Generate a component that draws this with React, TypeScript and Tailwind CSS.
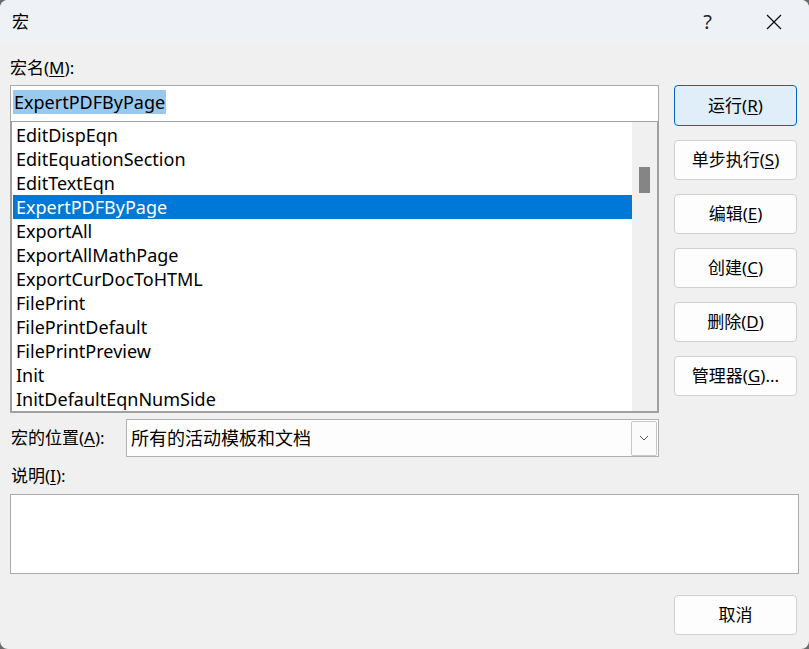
import { ReactNode } from "react";

const macros = [
  "EditDispEqn",
  "EditEquationSection",
  "EditTextEqn",
  "ExpertPDFByPage",
  "ExportAll",
  "ExportAllMathPage",
  "ExportCurDocToHTML",
  "FilePrint",
  "FilePrintDefault",
  "FilePrintPreview",
  "Init",
  "InitDefaultEqnNumSide",
];

const font = "font-['Segoe_UI','Noto_Sans','Noto_Sans_CJK_SC',sans-serif]";

function Key({ k }: { k: string }) {
  return <span className="underline underline-offset-2">{k}</span>;
}

function Btn({ children, primary }: { children: ReactNode; primary?: boolean }) {
  return (
    <div
      className={
        primary
          ? "h-[41px] flex items-center justify-center rounded-[4px] border border-[#0067c0] bg-[#e0eef9] text-[17px] text-black"
          : "h-[40px] flex items-center justify-center rounded-[4px] border border-[#d0d0d0] bg-[#fdfdfd] text-[17px] text-black"
      }
    >
      {children}
    </div>
  );
}

export default function App() {
  return (
    <div className={`w-[809px] h-[649px] bg-[#6b6b6b] ${font}`}>
      <div className="w-full h-full rounded-[8px] overflow-hidden bg-[#f0f0f0] flex flex-col">
        {/* title bar */}
        <div className="h-[43px] bg-[#eef2f7] flex items-center pl-[12px] shrink-0">
          <span className="text-[17px] text-black">宏</span>
          <span className="ml-auto mr-[54px] text-[20px] text-[#222]">?</span>
          <svg width="16" height="16" viewBox="0 0 16 16" className="mr-[27px]">
            <path d="M1 1 L15 15 M15 1 L1 15" stroke="#111" strokeWidth="1.3" />
          </svg>
        </div>

        <div className="flex px-[10px]">
          {/* left column */}
          <div className="w-[649px] flex flex-col">
            <div className="h-[42px] flex items-center text-[17px] pt-[7px]">
              宏名(<Key k="M" />):
            </div>
            <div className="h-[36px] border border-[#a9a9a9] border-b-0 bg-white flex items-center pl-[2px] pb-[4px]">
              <span className="bg-[#99c9ef] text-[18px] leading-[24px] px-[1px]">ExpertPDFByPage</span>
            </div>
            <div className="h-[292px] border-2 border-[#a0a0a0] border-t-[1px] bg-white flex">
              <div className="flex-1 pt-[1px]">
                {macros.map((m) => (
                  <div
                    key={m}
                    className={
                      m === "ExpertPDFByPage"
                        ? "h-[24px] flex items-center pl-[3px] ml-[1px] text-[18px] bg-[#0078d7] text-white"
                        : "h-[24px] flex items-center pl-[3px] ml-[1px] text-[18px] text-black"
                    }
                  >
                    {m}
                  </div>
                ))}
              </div>
              <div className="w-[25px] bg-[#f0f0f0] relative">
                <div className="absolute left-[7px] top-[45px] w-[11px] h-[26px] bg-[#858585]" />
              </div>
            </div>
            <div className="mt-[6px] h-[38px] flex items-center">
              <div className="w-[116px] pl-[1px] text-[17px]">
                宏的位置(<Key k="A" />):
              </div>
              <div className="flex-1 h-[38px] border border-[#b0b0b0] bg-[#fdfdfd] flex items-center pl-[4px] pr-[1px]">
                <span className="text-[18px]">所有的活动模板和文档</span>
                <div className="ml-auto w-[26px] h-[35px] border border-[#c8c8c8] rounded-[2px] bg-[#fbfbfb] flex items-center justify-center">
                  <svg width="10" height="6" viewBox="0 0 10 6">
                    <path d="M1 1 L5 5 L9 1" stroke="#555" strokeWidth="1" fill="none" />
                  </svg>
                </div>
              </div>
            </div>
          </div>

          {/* right column */}
          <div className="ml-[15px] w-[123px] pt-[42px] flex flex-col gap-[14px]">
            <Btn primary>
              运行(<Key k="R" />)
            </Btn>
            <Btn>
              单步执行(<Key k="S" />)
            </Btn>
            <Btn>
              编辑(<Key k="E" />)
            </Btn>
            <Btn>
              创建(<Key k="C" />)
            </Btn>
            <Btn>
              删除(<Key k="D" />)
            </Btn>
            <Btn>
              管理器(<Key k="G" />)...
            </Btn>
          </div>
        </div>

        <div className="px-[10px]">
          <div className="h-[37px] flex items-center pl-[1px] text-[17px]">
            说明(<Key k="I" />):
          </div>
          <div className="w-[789px] h-[80px] border border-[#aaaaaa] bg-white" />
          <div className="mt-[21px] flex justify-end pr-[2px]">
            <div className="w-[123px]">
              <Btn>取消</Btn>
            </div>
          </div>
        </div>
      </div>
    </div>
  );
}
